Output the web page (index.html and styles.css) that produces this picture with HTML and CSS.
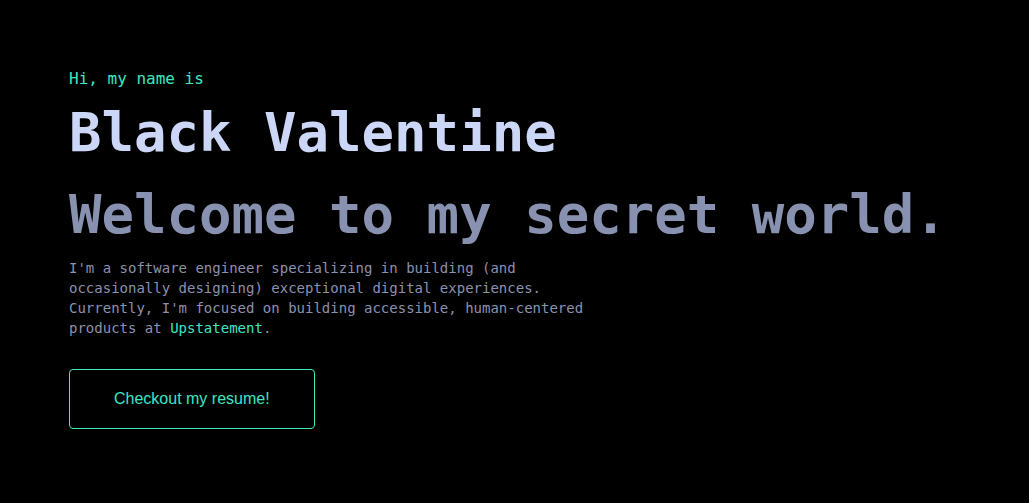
FILE: index.html
```html
<!DOCTYPE html>
<html lang="en">
<head>
<meta charset="utf-8">
<title>Black Valentine</title>
<link rel="stylesheet" href="styles.css">
</head>
<body>
<main class="hero">
  <h1 class="hero-intro">Hi, my name is</h1>
  <h2 class="big-heading name">Black Valentine</h2>
  <h3 class="big-heading tagline">Welcome to my secret world.</h3>
  <p class="hero-text">I'm a software engineer specializing in building (and occasionally designing) exceptional digital experiences. Currently, I'm focused on building accessible, human-centered products at <a class="link" href="#">Upstatement</a>.</p>
  <a class="resume-button" href="#">Checkout my resume!</a>
</main>
</body>
</html>
```

FILE: styles.css
```css
html, body {
  margin: 0;
  padding: 0;
  background: #000;
}

body {
  width: 1029px;
  height: 503px;
  overflow: hidden;
}

.hero {
  display: flex;
  flex-direction: column;
  align-items: flex-start;
  padding: 69px 0 0 66px;
  font-family: "DejaVu Sans Mono", "Liberation Mono", monospace;
}

.hero-intro {
  margin: 0 0 0 3px;
  font-size: 16px;
  line-height: 20px;
  font-weight: 400;
  color: #3ee6c4;
}

.big-heading {
  margin: 0 0 0 3px;
  font-size: 54px;
  line-height: 64px;
  font-weight: 700;
}

.name {
  margin-top: 12px;
  color: #ccd6f6;
}

.tagline {
  margin-top: 18px;
  color: #8892b0;
}

.hero-text {
  margin: 11px 0 0 3px;
  max-width: 530px;
  font-size: 14px;
  line-height: 20px;
  color: #8b92ad;
}

.link {
  color: #3ee6c4;
  text-decoration: none;
}

.resume-button {
  margin: 31px 0 0 3px;
  padding: 20px 44px;
  border: 1px solid #3ee6c4;
  border-radius: 4px;
  font-family: "Liberation Sans", Arial, sans-serif;
  font-size: 16px;
  line-height: 18px;
  color: #3ee6c4;
  text-decoration: none;
}
```
